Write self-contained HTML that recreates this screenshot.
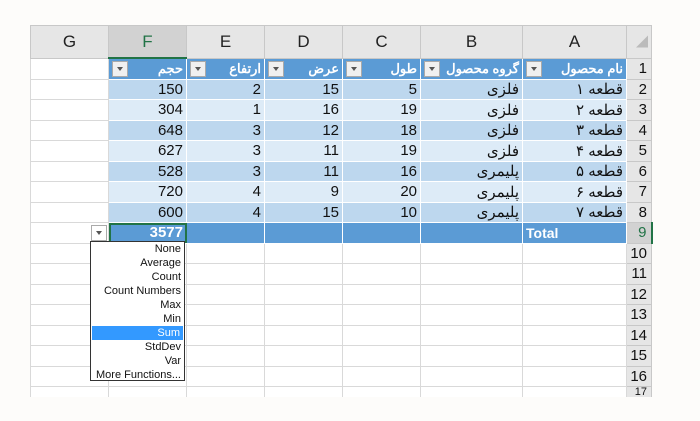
<!DOCTYPE html>
<html><head><meta charset="utf-8"><style>
body{margin:0;width:700px;height:421px;background:#fdfcfa;overflow:hidden;position:relative;font-family:"Liberation Sans","Noto Sans CJK SC",sans-serif}
table{position:absolute;left:30px;top:25px;border-collapse:collapse;table-layout:fixed}
td{padding:0 3px;border:1px solid #d9d9d9;font-size:15px;color:#111;text-align:right;white-space:nowrap;overflow:hidden;background:#fff;position:relative}
tr.h td{height:31px;background:#e6e6e6;border-color:#c8c8c8;text-align:center;font-size:17px;color:#222}
tr.h td.sel{background:#d2d2d2;color:#217346;border-bottom:2px solid #217346}
td.rn{background:#e6e6e6;border-color:#c8c8c8;text-align:right;font-size:15px;padding-right:4px}
tr.r td{height:19.5px}
tr.t1 td.d{background:#5b9bd5;color:#fff;font-size:13px;font-weight:bold;border-color:#fff}
tr.a td.d{background:#bdd7ee;border-color:#fff}
tr.b td.d{background:#ddebf7;border-color:#fff}
tr.tot td.d{background:#5b9bd5;color:#fff;font-weight:bold;border-color:#fff}
.fb{position:absolute;left:3px;top:2px;width:14px;height:14px;background:#f0f0f0;border:1px solid #aaa}
.fb:after{content:"";position:absolute;left:4px;top:5px;border:3px solid transparent;border-top:4px solid #555}
.menu{position:absolute;left:90px;top:241px;width:95px;height:140px;background:#fff;border:1px solid #333;font-size:11px;color:#111;box-sizing:border-box}
.menu div{height:14px;line-height:14px;text-align:right;padding-right:3px;white-space:nowrap;overflow:hidden}
.menu .hl{background:#3399ff;color:#fff;margin:0 1px}
</style></head><body>
<table>
<colgroup><col style="width:78px"><col style="width:78px"><col style="width:78px"><col style="width:78px"><col style="width:78px"><col style="width:102px"><col style="width:104px"><col style="width:25px"></colgroup>
<tr class="h"><td>G</td><td class="sel">F</td><td>E</td><td>D</td><td>C</td><td>B</td><td>A</td><td style="color:#bbb;font-size:12px;text-align:right">◢</td></tr>
<tr class="r t1"><td></td><td class="d"><span class="fb"></span>حجم</td><td class="d"><span class="fb"></span>ارتفاع</td><td class="d"><span class="fb"></span>عرض</td><td class="d"><span class="fb"></span>طول</td><td class="d"><span class="fb"></span>گروه محصول</td><td class="d"><span class="fb"></span>نام محصول</td><td class="rn">1</td></tr>
<tr class="r a"><td></td><td class="d">150</td><td class="d">2</td><td class="d">15</td><td class="d">5</td><td class="d">فلزی</td><td class="d">قطعه ۱</td><td class="rn">2</td></tr>
<tr class="r b"><td></td><td class="d">304</td><td class="d">1</td><td class="d">16</td><td class="d">19</td><td class="d">فلزی</td><td class="d">قطعه ۲</td><td class="rn">3</td></tr>
<tr class="r a"><td></td><td class="d">648</td><td class="d">3</td><td class="d">12</td><td class="d">18</td><td class="d">فلزی</td><td class="d">قطعه ۳</td><td class="rn">4</td></tr>
<tr class="r b"><td></td><td class="d">627</td><td class="d">3</td><td class="d">11</td><td class="d">19</td><td class="d">فلزی</td><td class="d">قطعه ۴</td><td class="rn">5</td></tr>
<tr class="r a"><td></td><td class="d">528</td><td class="d">3</td><td class="d">11</td><td class="d">16</td><td class="d">پلیمری</td><td class="d">قطعه ۵</td><td class="rn">6</td></tr>
<tr class="r b"><td></td><td class="d">720</td><td class="d">4</td><td class="d">9</td><td class="d">20</td><td class="d">پلیمری</td><td class="d">قطعه ۶</td><td class="rn">7</td></tr>
<tr class="r a"><td></td><td class="d">600</td><td class="d">4</td><td class="d">15</td><td class="d">10</td><td class="d">پلیمری</td><td class="d">قطعه ۷</td><td class="rn">8</td></tr>
<tr class="r tot"><td><span class="fb" style="left:60px;background:#fff"></span></td><td class="d" style="outline:2px solid #217346;outline-offset:-2px">3577</td><td class="d"></td><td class="d"></td><td class="d"></td><td class="d"></td><td class="d" style="text-align:left;font-size:14px">Total</td><td class="rn" style="color:#217346;background:#d2d2d2;border-right:2px solid #217346">9</td></tr>
<tr class="r"><td></td><td></td><td></td><td></td><td></td><td></td><td></td><td class="rn">10</td></tr>
<tr class="r"><td></td><td></td><td></td><td></td><td></td><td></td><td></td><td class="rn">11</td></tr>
<tr class="r"><td></td><td></td><td></td><td></td><td></td><td></td><td></td><td class="rn">12</td></tr>
<tr class="r"><td></td><td></td><td></td><td></td><td></td><td></td><td></td><td class="rn">13</td></tr>
<tr class="r"><td></td><td></td><td></td><td></td><td></td><td></td><td></td><td class="rn">14</td></tr>
<tr class="r"><td></td><td></td><td></td><td></td><td></td><td></td><td></td><td class="rn">15</td></tr>
<tr class="r"><td></td><td></td><td></td><td></td><td></td><td></td><td></td><td class="rn">16</td></tr>
<tr><td style="height:10px;border-bottom:none"></td><td style="border-bottom:none"></td><td style="border-bottom:none"></td><td style="border-bottom:none"></td><td style="border-bottom:none"></td><td style="border-bottom:none"></td><td style="border-bottom:none"></td><td class="rn" style="font-size:11px;vertical-align:top;line-height:10px;border-bottom:none">17</td></tr>
</table>
<div class="menu">
<div>None</div><div>Average</div><div>Count</div><div>Count Numbers</div><div>Max</div><div>Min</div><div class="hl">Sum</div><div>StdDev</div><div>Var</div><div>More Functions...</div>
</div>
</body></html>
